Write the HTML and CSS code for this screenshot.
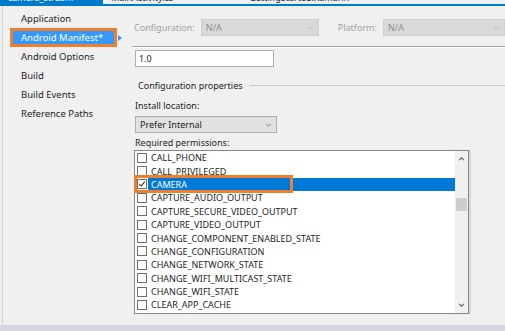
FILE: index.html
```html
<!DOCTYPE html>
<html lang="en">
<head>
    <meta charset="UTF-8">
    <meta name="viewport" content="width=device-width, initial-scale=1.0">
    <title>camera_stream - Android Manifest</title>
    <link rel="stylesheet" href="styles.css">
</head>
<body>
    <div class="tabs">
        <div class="tab active">camera_stream <span class="tab-icons">&#8722;&#8722; &#215;</span></div>
        <div class="tab">MainActivity.cs</div>
        <div class="tab">GettingStarted.Xamarin</div>
    </div>

    <div class="main">
        <ul class="sidebar">
            <li>Application</li>
            <li class="selected">Android Manifest*</li>
            <li>Android Options</li>
            <li>Build</li>
            <li>Build Events</li>
            <li>Reference Paths</li>
        </ul>

        <div class="content">
            <div class="config-row">
                <span class="dim">Configuration:</span>
                <div class="select disabled config-select">N/A
                    <svg class="chev" viewBox="0 0 8 5"><path d="M1 1 L4 4 L7 1" /></svg>
                </div>
                <span class="dim platform">Platform:</span>
                <div class="select disabled platform-select">N/A
                    <svg class="chev" viewBox="0 0 8 5"><path d="M1 1 L4 4 L7 1" /></svg>
                </div>
            </div>

            <div class="divider"></div>

            <div class="textbox">1.0</div>

            <div class="group-title"><span>Configuration properties</span><div class="group-line"></div></div>

            <div class="label install">Install location:</div>
            <div class="select location">Prefer Internal
                <svg class="chev" viewBox="0 0 8 5"><path d="M1 1 L4 4 L7 1" /></svg>
            </div>

            <div class="label perms">Required permissions:</div>
            <div class="listbox">
                <ul class="items">
                    <li><span class="check"></span><span class="name">CALL_PHONE</span></li>
                    <li><span class="check"></span><span class="name">CALL_PRIVILEGED</span></li>
                    <li class="current">
                        <span class="check checked"><svg viewBox="0 0 10 10"><path d="M1.5 5 L4 7.5 L8.5 2" /></svg></span><span class="name">CAMERA</span>
                        <span class="mark"></span>
                    </li>
                    <li><span class="check"></span><span class="name">CAPTURE_AUDIO_OUTPUT</span></li>
                    <li><span class="check"></span><span class="name">CAPTURE_SECURE_VIDEO_OUTPUT</span></li>
                    <li><span class="check"></span><span class="name">CAPTURE_VIDEO_OUTPUT</span></li>
                    <li><span class="check"></span><span class="name">CHANGE_COMPONENT_ENABLED_STATE</span></li>
                    <li><span class="check"></span><span class="name">CHANGE_CONFIGURATION</span></li>
                    <li><span class="check"></span><span class="name">CHANGE_NETWORK_STATE</span></li>
                    <li><span class="check"></span><span class="name">CHANGE_WIFI_MULTICAST_STATE</span></li>
                    <li><span class="check"></span><span class="name">CHANGE_WIFI_STATE</span></li>
                    <li><span class="check"></span><span class="name">CLEAR_APP_CACHE</span></li>
                </ul>
                <div class="scrollbar">
                    <svg class="arrow" viewBox="0 0 8 5"><path d="M1 4 L4 1 L7 4" /></svg>
                    <div class="thumb"></div>
                    <svg class="arrow down" viewBox="0 0 8 5"><path d="M1 1 L4 4 L7 1" /></svg>
                </div>
            </div>
        </div>
    </div>

    <div class="statusbar"></div>
</body>
</html>
```

FILE: styles.css
```css
body {
    margin: 0;
    width: 505px;
    height: 331px;
    overflow: hidden;
    background-color: #f0f0f0;
    font-family: "Noto Sans", "Open Sans", sans-serif;
    font-size: 9px;
    color: #1e1e1e;
    display: flex;
    flex-direction: column;
}

/* document tabs, only the bottom edge shows */
.tabs {
    height: 4px;
    display: flex;
    align-items: flex-end;
    overflow: hidden;
    background-color: #eef0f5;
    border-bottom: 2px solid #007acc;
}

.tab {
    flex: none;
    height: 12px;
    line-height: 12px;
    padding: 0 8px;
    color: #1e1e1e;
}

.tab.active {
    width: 87px;
    background-color: #007acc;
    color: white;
}

.tab-icons {
    margin-left: 8px;
}

.tab:nth-child(3) {
    margin-left: 60px;
}

.main {
    flex: 1;
    display: flex;
    border-left: 1px solid #d4d4d4;
    margin-left: 2px;
}

.sidebar {
    width: 129px;
    flex: none;
    list-style: none;
    margin: 0;
    padding: 6px 0 0 0;
    font-size: 9.5px;
}

.sidebar li {
    position: relative;
    width: 93px;
    height: 13px;
    line-height: 13px;
    margin: 0 0 6px 10px;
    padding-left: 8px;
}

.sidebar li.selected {
    background-color: #3399ff;
    color: white;
    outline: 3px solid #ee7f2f;
}

.sidebar li.selected::after {
    content: "";
    position: absolute;
    right: -8px;
    top: 4px;
    border-left: 4px solid #3399ff;
    border-top: 3px solid transparent;
    border-bottom: 3px solid transparent;
}

.content {
    flex: 1;
    display: flex;
    flex-direction: column;
    align-items: flex-start;
}

.config-row {
    display: flex;
    align-items: center;
    margin-top: 13px;
    margin-left: 2px;
}

.dim {
    color: #a2a2a2;
}

.platform {
    margin-left: 19px;
}

.select {
    position: relative;
    height: 15px;
    line-height: 15px;
    border: 1px solid #adadad;
    background-color: #e1e1e1;
    padding-left: 4px;
    box-sizing: content-box;
}

.select.disabled {
    background-color: #d9d9d9;
    border-color: #d0d0d0;
    color: #8c8c8c;
}

.config-select {
    width: 112px;
    margin-left: 6px;
}

.platform-select {
    width: 116px;
    margin-left: 6px;
}

.chev {
    position: absolute;
    right: 4px;
    top: 6px;
    width: 7px;
    height: 4px;
    fill: none;
    stroke: #707070;
    stroke-width: 1;
}

.select.disabled .chev {
    stroke: #b0b0b0;
}

.divider {
    align-self: stretch;
    margin-top: 10px;
    border-top: 1px solid #a8a8a8;
    border-bottom: 1px solid #ffffff;
}

.textbox {
    width: 134px;
    height: 15px;
    line-height: 15px;
    margin: 2px 0 0 3px;
    padding-left: 3px;
    border: 1px solid #abadb3;
    background-color: white;
}

.group-title {
    align-self: stretch;
    display: flex;
    align-items: center;
    margin: 12px 0 0 6px;
    height: 12px;
}

.group-line {
    flex: 1;
    margin-left: 6px;
    border-top: 1px solid #c8c8c8;
}

.label {
    margin-left: 3px;
    height: 12px;
    line-height: 12px;
}

.install {
    margin-top: 9px;
}

.location {
    width: 136px;
    margin: 4px 0 0 3px;
}

.perms {
    margin-top: 4px;
}

.listbox {
    display: flex;
    width: 333px;
    height: 162px;
    margin: 1px 0 0 2px;
    border: 1px solid #828790;
    background-color: white;
    box-shadow: 2px 0 0 #d8d8d8;
}

.items {
    flex: 1;
    list-style: none;
    margin: 0;
    padding: 0;
}

.items li {
    position: relative;
    display: flex;
    align-items: center;
    height: 13.4px;
    padding-left: 2px;
}

.check {
    flex: none;
    width: 8px;
    height: 8px;
    border: 1px solid #6e6e6e;
    background-color: white;
    display: flex;
}

.check svg {
    width: 8px;
    height: 8px;
    fill: none;
    stroke: #222;
    stroke-width: 1.3;
}

.name {
    flex: 1;
    height: 13px;
    line-height: 13px;
    margin-left: 1px;
    padding-left: 3px;
}

.current .name {
    background-color: #0078d7;
    color: white;
}

/* annotation box around the CAMERA row */
.mark {
    position: absolute;
    left: -1px;
    top: -3px;
    width: 153px;
    height: 12px;
    border: 3px solid #ee7f2f;
}

.scrollbar {
    width: 13px;
    flex: none;
    background-color: #f0f0f0;
    display: flex;
    flex-direction: column;
    align-items: center;
}

.arrow {
    width: 7px;
    height: 4px;
    margin-top: 6px;
    fill: none;
    stroke: #606060;
    stroke-width: 1.3;
}

.arrow.down {
    margin-top: auto;
    margin-bottom: 6px;
}

.thumb {
    width: 11px;
    height: 13px;
    margin-top: 37px;
    background-color: #cdcdcd;
}

.statusbar {
    height: 6px;
    flex: none;
    background-color: #d5d6e1;
}
```
